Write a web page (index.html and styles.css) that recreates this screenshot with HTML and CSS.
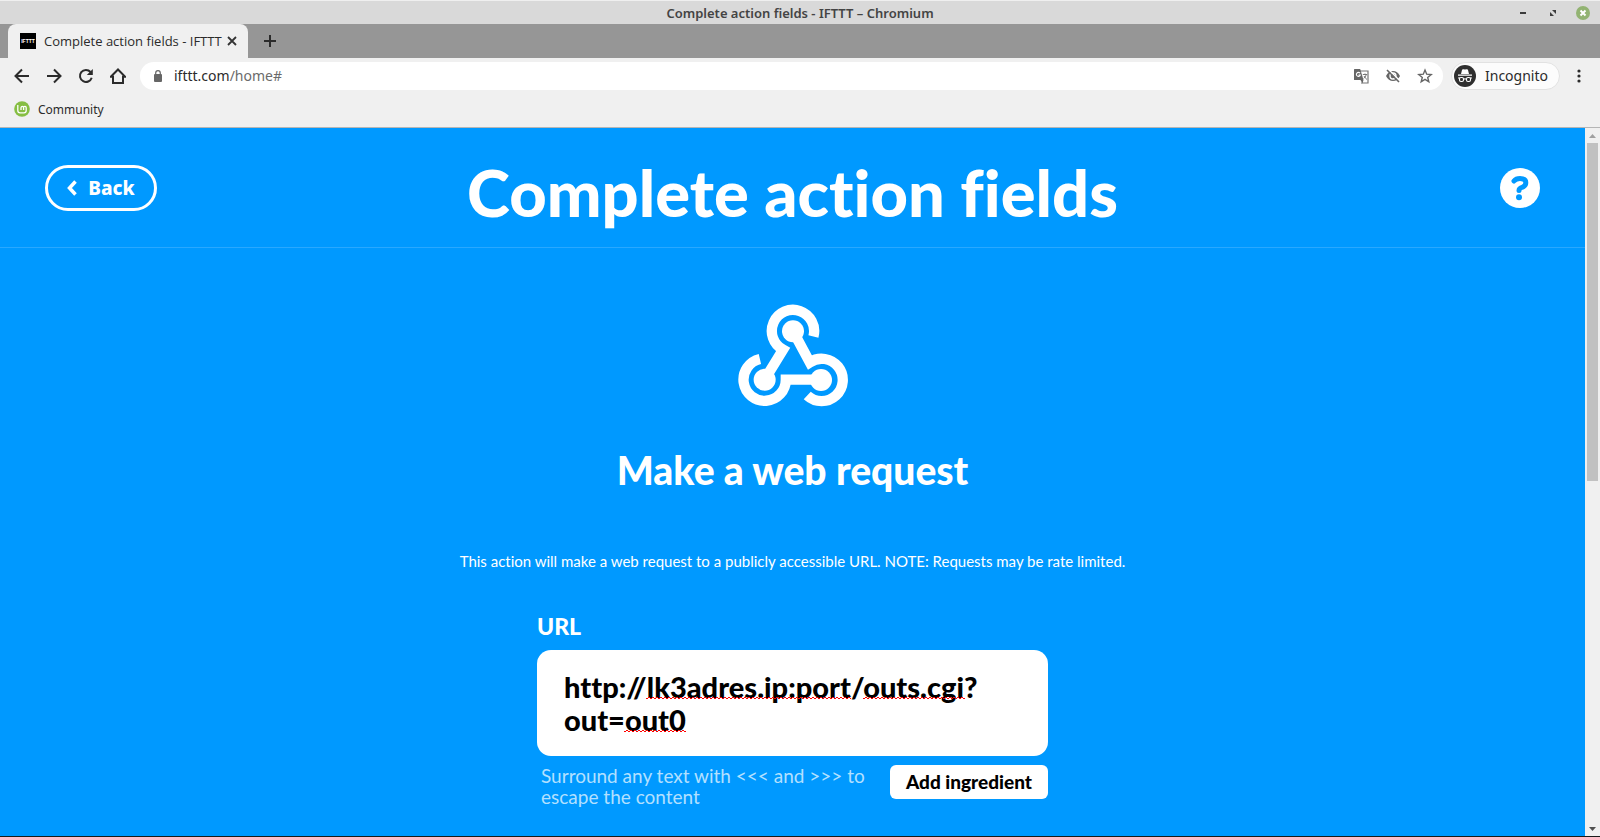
FILE: index.html
```html
<!DOCTYPE html>
<html lang="en">

<head>
    <meta charset="UTF-8">
    <meta name="viewport" content="width=device-width, initial-scale=1.0">
    <title>Complete action fields - IFTTT</title>
    <link rel="stylesheet" href="styles.css">
</head>

<body>
    <div class="titlebar">
        <div class="window-title">Complete action fields - IFTTT – Chromium</div>
        <div class="window-buttons">
            <button type="button" aria-label="Minimize">
                <svg width="14" height="14" viewBox="0 0 14 14"><path d="M4 7h6" stroke="#3c3c3c" stroke-width="2"/></svg>
            </button>
            <button type="button" aria-label="Restore">
                <svg width="14" height="14" viewBox="0 0 14 14" fill="#3c3c3c"><path d="M6 4h4v4zM4 6v4h4z"/></svg>
            </button>
            <button type="button" aria-label="Close window">
                <svg width="14" height="14" viewBox="0 0 14 14"><circle cx="7" cy="7" r="7" fill="#92b372"/><path d="M4.500 4.500l5 5M9.500 4.500l-5 5" stroke="#fff" stroke-width="2"/></svg>
            </button>
        </div>
    </div>

    <div class="tabstrip">
        <div class="tab">
            <svg class="favicon" width="16" height="16" viewBox="0 0 16 16"><path d="M0 0h16v16H0z"/><text x="8" y="10" text-anchor="middle">IFTTT</text></svg>
            <span class="tab-title">Complete action fields - IFTTT</span>
            <button type="button" aria-label="Close tab">
                <svg width="10" height="10" viewBox="0 0 10 10"><path d="M1 1l8 8M9 1l-8 8" stroke="#333" stroke-width="1.800"/></svg>
            </button>
        </div>
        <button type="button" class="new-tab" aria-label="New tab">
            <svg width="12" height="12" viewBox="0 0 12 12"><path d="M6 0v12M0 6h12" stroke="#2b2b2b" stroke-width="2"/></svg>
        </button>
    </div>

    <div class="toolbar">
        <div class="nav-buttons">
            <button type="button" aria-label="Go back">
                <svg width="16" height="16" viewBox="0 0 16 16"><path d="M15 8H2M8 1.500L1.500 8 8 14.500"/></svg>
            </button>
            <button type="button" aria-label="Go forward">
                <svg width="16" height="16" viewBox="0 0 16 16"><path d="M1 8h13M8 1.500L14.500 8 8 14.500"/></svg>
            </button>
            <button type="button" aria-label="Reload">
                <svg width="16" height="16" viewBox="0 0 16 16"><path d="M12.500 4A6 6 0 1 0 13.700 9.700"/><path class="arrowhead" d="M14.800 1v6H8.800z"/></svg>
            </button>
            <button type="button" aria-label="Home">
                <svg width="16" height="16" viewBox="0 0 16 16"><path d="M.8 8.800L8 1.500l7.200 7.300H13V15H3V8.800z"/></svg>
            </button>
        </div>
        <div class="omnibox">
            <svg width="10" height="12" viewBox="0 0 10 12"><rect x="1" y="4" width="8" height="8" rx="1" fill="#666"/><path d="M2.700 4.500V3a2.300 2.300 0 0 1 4.600 0v1.500" fill="none" stroke="#666" stroke-width="1.200"/></svg>
            <div class="address"><span>ifttt.com</span>/home#</div>
            <button type="button" aria-label="Translate this page">
                <svg width="16" height="16" viewBox="0 0 16 16"><path d="M6 3h9v12H8" fill="none" stroke="#777" stroke-width="1.200"/><path d="M1.500 1h5.700l3.300 11H1.500Q1 12 1 11.500v-10Q1 1 1.500 1z" fill="#666"/><path d="M7.500 12l2 3.500 1-3.500z" fill="#666"/><path d="M7 5.200A2 2 0 1 0 7.300 7H5.500" fill="none" stroke="#fff" stroke-width="1.100"/><path d="M9.800 6.500h4.400M12 5.500v1M13.300 6.500q-.6 2.700-2.600 4M11 8q1 2 3 3.500" fill="none" stroke="#777"/></svg>
            </button>
            <button type="button" aria-label="Third-party cookies blocked">
                <svg width="16" height="16" viewBox="0 0 16 16"><path d="M1 8q2.500-5 7-5t7 5q-2.500 5-7 5t-7-5z" fill="#666"/><circle cx="8" cy="8" r="3" fill="#666" stroke="#fff" stroke-width="1.300"/><path d="M3 1l12 12" stroke="#fff" stroke-width="1.600"/><path d="M2 2l12 12" stroke="#666" stroke-width="1.600"/></svg>
            </button>
            <button type="button" aria-label="Bookmark this page">
                <svg width="16" height="16" viewBox="0 0 16 16"><path d="M8 2l1.700 4.200 4.500.3-3.500 2.900 1.100 4.400L8 11.400l-3.800 2.400 1.100-4.400-3.500-2.900 4.500-.3z" fill="none" stroke="#666" stroke-width="1.400"/></svg>
            </button>
        </div>
        <div class="incognito">
            <svg width="22" height="22" viewBox="0 0 22 22"><circle cx="11" cy="11" r="11" fill="#2f2f2f"/><path d="M7 9l1-4q.3-1 1.300-.8l1.700.4 1.700-.4Q13.700 4 14 5l1 4zM4 9.500h14v1.200H4z" fill="#fff"/><g fill="none" stroke="#fff" stroke-width="1.100"><rect x="5.500" y="12.500" width="4" height="4" rx="1.500"/><rect x="12.500" y="12.500" width="4" height="4" rx="1.500"/><path d="M9.500 14.200q1.500-1 3 0M4 13h2M16 13h2"/></g></svg>
            <span>Incognito</span>
        </div>
        <button type="button" class="menu" aria-label="Menu">
            <svg width="4" height="14" viewBox="0 0 4 14" fill="#2b2b2b"><circle cx="2" cy="2" r="1.600"/><circle cx="2" cy="7" r="1.600"/><circle cx="2" cy="12" r="1.600"/></svg>
        </button>
    </div>

    <div class="bookmarks">
        <a href="#">
            <svg width="16" height="16" viewBox="0 0 16 16"><circle cx="8" cy="8" r="7.800" fill="#86be43"/><path d="M3.800 4v5.500q0 2.300 2.300 2.300h3.800q2.300 0 2.300-2.300V6.700q0-1.400-1.300-1.400T9.600 6.700V9M9.600 6.700q0-1.400-1.200-1.400T7 6.700V9" fill="none" stroke="#fff" stroke-width="1.300"/></svg>
            Community
        </a>
    </div>

    <div class="viewport">
        <div class="page">
            <header class="header">
                <a href="#" class="back">
                    <svg width="10" height="16" viewBox="0 0 10 16"><path d="M8.500 1.500L2.500 8l6 6.500" fill="none" stroke="#fff" stroke-width="3.500"/></svg>
                    Back
                </a>
                <h1>Complete action fields</h1>
                <a href="#" class="help" aria-label="Help">
                    <svg width="40" height="40" viewBox="0 0 40 40"><circle cx="20" cy="20" r="20" fill="#fff"/><path d="M14 13Q16 10.500 20 10.500q5.800 0 5.800 4.200 0 3-3.200 4.400Q19 20 19 22.500" fill="none" stroke="#09f" stroke-width="5" stroke-linecap="round"/><circle cx="19" cy="29.300" r="3" fill="#09f"/></svg>
                </a>
            </header>
            <main>
                <svg class="webhook" width="110" height="103" viewBox="54 43 330 309">
                    <g fill="none" stroke="#fff" stroke-width="31">
                        <path d="M280.300 140.400A63.500 63.500 0 1 0 189 180L134 270"/>
                        <path d="M119.700 208.100A63.500 63.500 0 1 0 197.500 270H302"/>
                        <path d="M219 124L269.500 218A63.500 63.500 0 1 1 261.700 317.400"/>
                    </g>
                    <g fill="#fff">
                        <circle cx="219" cy="125" r="33"/>
                        <circle cx="134" cy="270" r="33"/>
                        <circle cx="303" cy="271" r="33"/>
                    </g>
                </svg>
                <h2>Make a web request</h2>
                <p class="description">This action will make a web request to a publicly accessible URL. NOTE: Requests may be rate limited.</p>
                <form class="field">
                    <label for="url">URL</label>
                    <div class="url-box">
                        <textarea id="url" rows="2" spellcheck="false">http://lk3adres.ip:port/outs.cgi?out=out0</textarea>
                        <span class="squiggle host"></span>
                        <span class="squiggle path"></span>
                        <span class="squiggle value"></span>
                    </div>
                    <div class="field-footer">
                        <p>Surround any text with &lt;&lt;&lt; and &gt;&gt;&gt; to escape the content</p>
                        <button type="button">Add ingredient</button>
                    </div>
                </form>
            </main>
        </div>
        <div class="scrollbar">
            <svg width="7" height="4" viewBox="0 0 7 4"><path d="M0 4h7L3.500 0z" fill="#a0a0a0"/></svg>
            <div class="track"><div class="thumb"></div></div>
            <svg width="7" height="4" viewBox="0 0 7 4"><path d="M0 0h7L3.500 4z" fill="#505050"/></svg>
        </div>
    </div>
</body>

</html>
```
FILE: styles.css
```css
* {
    box-sizing: border-box;
}

body {
    margin: 0;
    height: 100vh;
    display: flex;
    flex-direction: column;
    overflow: hidden;
    border-bottom: 1px solid #1a1a1a;
    background-color: #f0f0f0;
    font-family: "Noto Sans", sans-serif;
    font-size: 13px;
    color: #2b2b2b;
}

button {
    display: flex;
    align-items: center;
    justify-content: center;
    padding: 0;
    border: none;
    background: none;
    cursor: pointer;
}

a {
    color: inherit;
    text-decoration: none;
}

svg {
    flex-shrink: 0;
}

/* Window title */
.titlebar {
    display: grid;
    grid-template-columns: 1fr auto 1fr;
    align-items: center;
    height: 24px;
    padding: 0 10px;
    border-top: 1px solid #efefef;
    background-color: #d9d9d9;
}

.window-title {
    grid-column: 2;
    font-size: 13px;
    font-weight: 600;
    color: #444;
}

.window-buttons {
    display: flex;
    justify-content: flex-end;
    gap: 16px;
}

/* Tabs */
.tabstrip {
    display: flex;
    height: 34px;
    padding-left: 8px;
    background-color: #969696;
}

.tab {
    display: flex;
    align-items: center;
    width: 240px;
    padding: 0 11px 0 12px;
    border-radius: 8px 8px 0 0;
    background-color: #f0f0f0;
}

.favicon text {
    fill: #fff;
    font-family: "Liberation Sans", sans-serif;
    font-size: 5px;
    font-weight: bold;
}

.tab-title {
    flex: 1;
    margin-left: 8px;
    font-family: "Open Sans", sans-serif;
    font-size: 13px;
    white-space: nowrap;
}

.new-tab {
    width: 44px;
}

/* Address row */
.toolbar {
    display: flex;
    align-items: center;
    height: 36px;
    padding: 0 19px 0 14px;
}

.nav-buttons {
    display: flex;
    gap: 16px;
}

.nav-buttons path {
    fill: none;
    stroke: #2b2b2b;
    stroke-width: 2;
}

.nav-buttons .arrowhead {
    fill: #2b2b2b;
    stroke: none;
}

.omnibox {
    flex: 1;
    display: flex;
    align-items: center;
    gap: 16px;
    height: 28px;
    margin-left: 14px;
    padding: 0 10px 0 13px;
    border-radius: 14px;
    background-color: #fff;
}

.address {
    flex: 1;
    margin-left: -5px;
    font-size: 14px;
    line-height: 18px;
    color: #6b6b6b;
}

.address span {
    color: #2b2b2b;
}

.incognito {
    display: flex;
    align-items: center;
    gap: 9px;
    height: 28px;
    margin-left: 8px;
    padding: 0 11px 0 2px;
    border: 1px solid #e2e2e2;
    border-radius: 14px;
    background-color: #fcfcfc;
    font-size: 14px;
    line-height: 18px;
}

.menu {
    margin-left: 17px;
}

/* Bookmarks */
.bookmarks {
    display: flex;
    align-items: center;
    height: 34px;
    padding: 0 14px 3px;
    border-bottom: 1px solid #b5b5b5;
}

.bookmarks a {
    display: flex;
    align-items: center;
    gap: 8px;
    font-size: 12px;
}

/* Page */
.viewport {
    flex: 1;
    display: flex;
    min-height: 0;
}

.page {
    flex: 1;
    overflow: hidden;
    background-color: #09f;
    font-family: "Lato Black", Lato, sans-serif;
    font-variant-ligatures: none;
    color: #fff;
}

.header {
    display: grid;
    grid-template-columns: 1fr auto 1fr;
    align-items: start;
    height: 120px;
    padding: 24px 45px 0;
    border-bottom: 1px solid #29a8ff;
}

.back {
    display: flex;
    align-items: center;
    justify-content: center;
    gap: 11px;
    justify-self: start;
    width: 112px;
    height: 46px;
    margin-top: 13px;
    border: 3px solid #fff;
    border-radius: 23px;
    font-family: "Noto Sans", sans-serif;
    font-size: 19px;
    font-weight: 800;
}

h1 {
    margin: 0;
    font-size: 65px;
    font-weight: 900;
    line-height: 80px;
}

.help {
    justify-self: end;
    margin-top: 16px;
}

.help svg {
    display: block;
}

main {
    display: flex;
    flex-direction: column;
    align-items: center;
    padding-top: 56px;
}

h2 {
    margin: 38px 0 0;
    font-size: 39px;
    font-weight: 900;
    line-height: 50px;
}

.description {
    margin: 56px 0 0;
    font-family: Lato, sans-serif;
    font-size: 15px;
    line-height: 20px;
}

.field {
    width: 511px;
    margin-top: 40px;
}

.field label {
    display: block;
    font-size: 23px;
    font-weight: 900;
    line-height: 31px;
}

.url-box {
    position: relative;
    margin-top: 8px;
}

.url-box textarea {
    display: block;
    width: 100%;
    padding: 20px 27px;
    border: none;
    border-radius: 14px;
    outline: none;
    resize: none;
    overflow: hidden;
    background-color: #fff;
    font-family: "Lato Black", Lato, sans-serif;
    font-size: 29px;
    font-variant-ligatures: none;
    font-weight: 900;
    line-height: 33px;
    color: #000;
}

/* Spelling marks over the text */
.squiggle {
    position: absolute;
    height: 2px;
    background: repeating-conic-gradient(#f00 0 25%, transparent 0 50%) 0 0 / 4px 2px;
}

.host {
    top: 47px;
    left: 109px;
    width: 205px;
}

.path {
    top: 47px;
    left: 326px;
    width: 102px;
}

.value {
    top: 80px;
    left: 87px;
    width: 62px;
}

.field-footer {
    display: flex;
    align-items: flex-start;
    justify-content: space-between;
    margin-top: 9px;
    padding-left: 4px;
}

.field-footer p {
    width: 330px;
    margin: 0;
    font-family: Lato, sans-serif;
    font-size: 19px;
    line-height: 21px;
    color: #b3e0ff;
}

.field-footer button {
    width: 158px;
    height: 34px;
    padding-bottom: 2px;
    border-radius: 6px;
    background-color: #fff;
    font-family: "Lato Black", Lato, sans-serif;
    font-size: 19px;
    font-weight: 900;
    color: #000;
}

/* Scrollbar */
.scrollbar {
    display: flex;
    flex-direction: column;
    align-items: center;
    gap: 5px;
    width: 15px;
    padding: 6px 0 5px;
    background-color: #f0f0f0;
}

.track {
    flex: 1;
    width: 11px;
}

.thumb {
    height: 338px;
    background-color: #c1c1c1;
}
```
